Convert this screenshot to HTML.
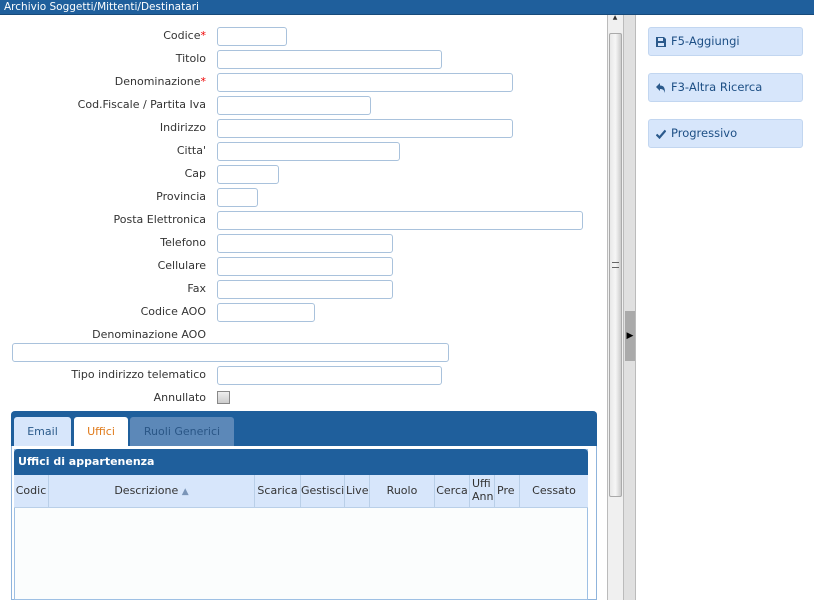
<!DOCTYPE html>
<html><head><meta charset="utf-8"><style>
*{box-sizing:border-box;margin:0;padding:0}
body{width:814px;height:600px;overflow:hidden;background:#fff;font-family:"DejaVu Sans","Liberation Sans",sans-serif;font-size:11px;color:#333;position:relative}
.abs{position:absolute}
.title{left:0;top:0;width:814px;height:15px;background:#1f5f9c;color:#fff;font-size:10.5px;line-height:14px;padding-left:4px;border-bottom:1px solid #174a7a}
.lbl{position:absolute;right:608px;text-align:right;white-space:nowrap;font-size:11px;line-height:18px}
.lbl b{color:#e00;font-weight:normal}
.in{position:absolute;height:19px;border:1px solid #a9c2dc;border-radius:3px;background:#fff}
.btn{position:absolute;left:648px;width:155px;height:29px;background:#d7e6fb;border:1px solid #c2d6f0;border-radius:3px;font-size:11.5px;line-height:27px;padding-left:22px;color:#1d4f85}
.btn svg{position:absolute;left:7px;top:9px}
.th{position:absolute;top:475px;height:32px;border-right:1px solid #b9cfe8;font-size:11px;line-height:32px;text-align:center;color:#333}
</style></head><body>
<div class="abs title">Archivio Soggetti/Mittenti/Destinatari</div>

<div class="lbl" style="top:27px">Codice<b>*</b></div><div class="in" style="left:217px;top:27px;width:70px"></div>
<div class="lbl" style="top:50px">Titolo</div><div class="in" style="left:217px;top:50px;width:225px"></div>
<div class="lbl" style="top:73px">Denominazione<b>*</b></div><div class="in" style="left:217px;top:73px;width:296px"></div>
<div class="lbl" style="top:96px">Cod.Fiscale / Partita Iva</div><div class="in" style="left:217px;top:96px;width:154px"></div>
<div class="lbl" style="top:119px">Indirizzo</div><div class="in" style="left:217px;top:119px;width:296px"></div>
<div class="lbl" style="top:142px">Citta'</div><div class="in" style="left:217px;top:142px;width:183px"></div>
<div class="lbl" style="top:165px">Cap</div><div class="in" style="left:217px;top:165px;width:62px"></div>
<div class="lbl" style="top:188px">Provincia</div><div class="in" style="left:217px;top:188px;width:41px"></div>
<div class="lbl" style="top:211px">Posta Elettronica</div><div class="in" style="left:217px;top:211px;width:366px"></div>
<div class="lbl" style="top:234px">Telefono</div><div class="in" style="left:217px;top:234px;width:176px"></div>
<div class="lbl" style="top:257px">Cellulare</div><div class="in" style="left:217px;top:257px;width:176px"></div>
<div class="lbl" style="top:280px">Fax</div><div class="in" style="left:217px;top:280px;width:176px"></div>
<div class="lbl" style="top:303px">Codice AOO</div><div class="in" style="left:217px;top:303px;width:98px"></div>
<div class="lbl" style="top:326px">Denominazione AOO</div>
<div class="in" style="left:12px;top:343px;width:437px"></div>
<div class="lbl" style="top:366px">Tipo indirizzo telematico</div><div class="in" style="left:217px;top:366px;width:225px"></div>
<div class="lbl" style="top:389px">Annullato</div><div class="abs" style="left:217px;top:391px;width:13px;height:13px;border:1px solid #888;background:linear-gradient(#eee,#ccc)"></div>

<div class="abs" style="left:11px;top:411px;width:586px;height:189px;border:1px solid #8fb4dc;border-top:none;border-radius:4px 4px 0 0;background:#fff"></div>
<div class="abs" style="left:11px;top:411px;width:586px;height:35px;background:#1f5f9c;border-radius:4px 4px 0 0"></div>
<div class="abs" style="left:14px;top:417px;width:57px;height:29px;background:#d7e6fb;border-radius:3px 3px 0 0;text-align:center;line-height:29px;color:#2a5a8a">Email</div>
<div class="abs" style="left:74px;top:417px;width:54px;height:30px;background:#fff;border-radius:3px 3px 0 0;text-align:center;line-height:29px;color:#e07a1a">Uffici</div>
<div class="abs" style="left:130px;top:417px;width:104px;height:29px;background:#5c88b8;border-radius:3px 3px 0 0;text-align:center;line-height:29px;color:#2a5686">Ruoli Generici</div>

<div class="abs" style="left:14px;top:449px;width:574px;height:151px;border:1px solid #9ec0e4;background:#fbfdfd"></div>
<div class="abs" style="left:14px;top:449px;width:574px;height:26px;background:#1f5f9c;border-radius:4px 4px 0 0;color:#fff;font-weight:bold;font-size:11px;line-height:26px;padding-left:4px">Uffici di appartenenza</div>
<div class="abs" style="left:14px;top:475px;width:574px;height:33px;background:#d7e6fb;border-bottom:1px solid #b9cfe8"></div>
<div class="th" style="left:14px;width:35px">Codic</div>
<div class="th" style="left:49px;width:206px">Descrizione <span style="color:#7a95b8;font-size:9px">&#9650;</span></div>
<div class="th" style="left:255px;width:46px">Scarica</div>
<div class="th" style="left:301px;width:44px">Gestisci</div>
<div class="th" style="left:345px;width:25px;text-align:left;padding-left:1px">Live</div>
<div class="th" style="left:370px;width:65px">Ruolo</div>
<div class="th" style="left:435px;width:35px">Cerca</div>
<div class="th" style="left:470px;width:25px;line-height:13px;padding-top:2px;text-align:left;padding-left:2px">Uffi<br>Ann</div>
<div class="th" style="left:495px;width:25px;text-align:left;padding-left:2px">Pre</div>
<div class="th" style="left:520px;width:68px;border-right:none">Cessato</div>

<div class="abs" style="left:607px;top:15px;width:17px;height:585px;background:#f0f0f0;border-left:1px solid #bbb;border-right:1px solid #bbb"></div>
<div class="abs" style="left:610px;top:14px;width:10px;height:10px;font-size:6px;color:#333;text-align:center">&#9650;</div>
<div class="abs" style="left:609px;top:33px;width:13px;height:464px;background:linear-gradient(90deg,#e8e8e8,#f6f6f6,#ccc);border:1px solid #aaa;border-radius:2px"></div>
<div class="abs" style="left:612px;top:262px;width:7px;height:6px;border-top:1px solid #666;border-bottom:1px solid #666"></div>
<div class="abs" style="left:624px;top:15px;width:12px;height:585px;background:#e0e0e0;border-right:1px solid #bbb"></div>
<div class="abs" style="left:625px;top:311px;width:10px;height:50px;background:#aaa;color:#000;font-size:9px;line-height:50px;text-align:center">&#9654;</div>

<div class="btn" style="top:27px"><svg width="10" height="10" viewBox="0 0 10 10"><path d="M0 0H8L10 2V10H0Z" fill="#2b5a8c"/><rect x="2" y="1" width="5" height="3" fill="#d7e6fb"/><rect x="2" y="6" width="6" height="3" fill="#d7e6fb"/></svg>F5-Aggiungi</div>
<div class="btn" style="top:73px"><svg width="10" height="10" viewBox="0 0 10 10"><path d="M0 4L4 0V2.5C8 2.5 9 5 9 10C8 7 7 6 4 6V8Z" fill="#2b5a8c"/></svg>F3-Altra Ricerca</div>
<div class="btn" style="top:119px"><svg width="10" height="10" viewBox="0 0 10 10"><path d="M0.5 5.5L3.5 8.5L9.5 1.5" stroke="#2b5a8c" stroke-width="2.2" fill="none"/></svg>Progressivo</div>
</body></html>
